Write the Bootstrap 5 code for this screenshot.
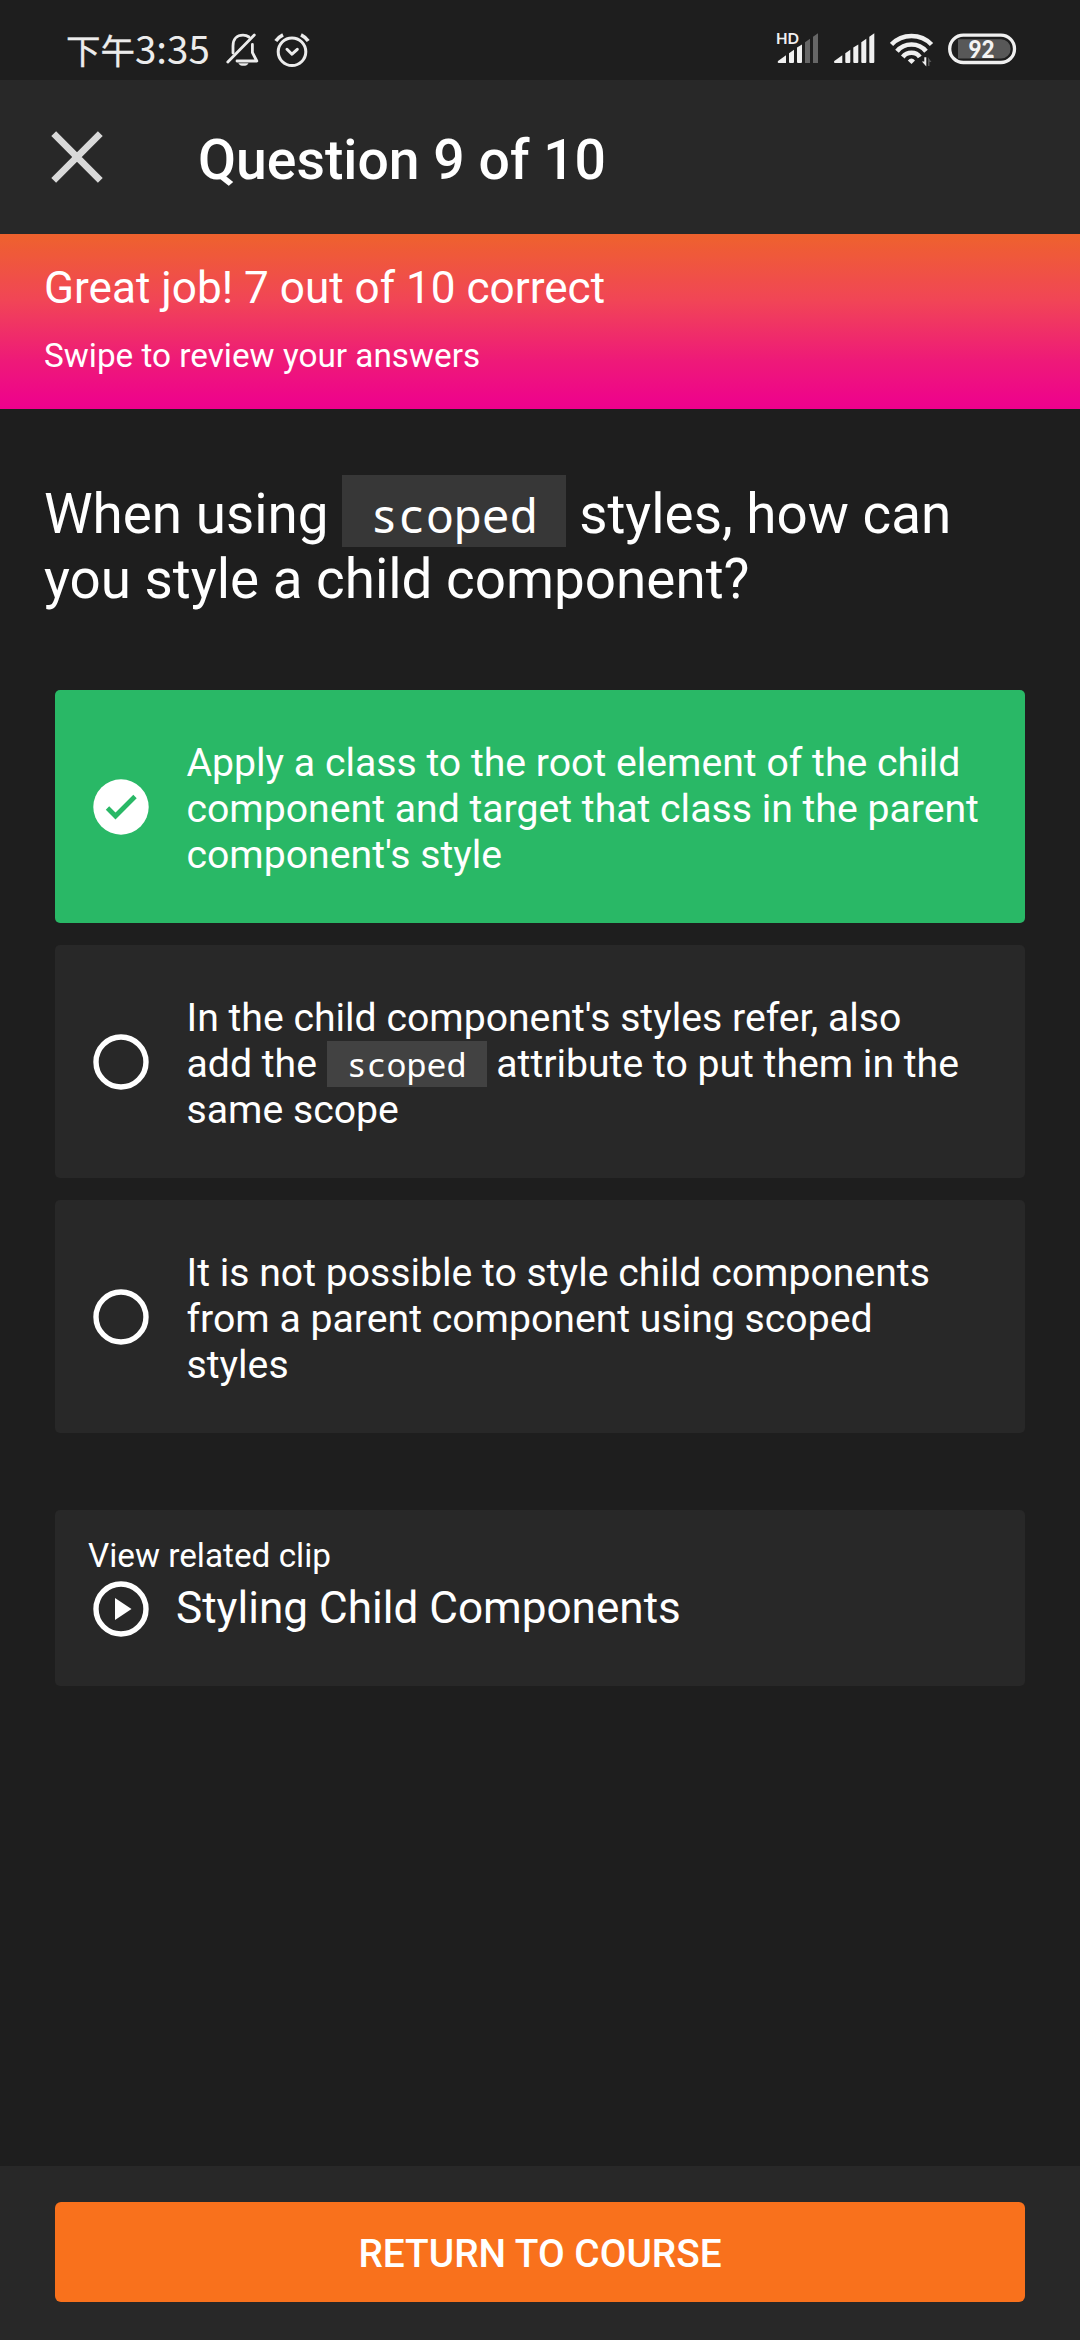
<!DOCTYPE html>
<html lang="en" data-bs-theme="dark">
<head>
<meta charset="utf-8">
<meta name="viewport" content="width=device-width, initial-scale=1">
<title>Question 9 of 10</title>
<link href="https://cdn.jsdelivr.net/npm/bootstrap@5.3.0/dist/css/bootstrap.min.css" rel="stylesheet">
<script src="https://cdn.jsdelivr.net/npm/bootstrap@5.3.0/dist/js/bootstrap.bundle.min.js"></script>
<style>
  body { background: #1e1e1e; color: #fff; font-family: Roboto, "Noto Sans CJK SC", sans-serif; height: 2340px; overflow: hidden; }
  svg { display: block; flex: none; }
  .statusbar { height: 80px; padding: 30px 60px 0 66px; }
  .clock { font-family: "Noto Sans CJK SC", sans-serif; font-size: 38.5px; line-height: 40px; height: 40px; width: 160px; margin-top: -3px; color: #ececec; }
  .clock .ampm { font-size: 34.5px; -webkit-text-stroke: .3px #ececec; }
  .titlebar { height: 154px; background: #282828; padding-left: 51px; }
  .titlebar h1 { font-size: 55.3px; line-height: 64px; font-weight: 500; padding: 7px 0 0; margin-left: 95px; }
  .score { height: 175px; padding: 28px 44px 0; background: linear-gradient(#ee622d, #f14556 38%, #ee1a78 72%, #ee008e); }
  .score-main { font-size: 44.1px; line-height: 52px; margin-bottom: 22px; }
  .score-hint { font-size: 33.3px; line-height: 39px; }
  .question { font-size: 54.8px; line-height: 64.6px; padding: 73px 44px 79px; }
  .code-chip { font-family: "Noto Sans Mono", "DejaVu Sans Mono", monospace; line-height: 1; color: #fff; }
  .question .code-chip { font-size: 46.5px; background: #373737; padding: 8px 28px 0; }
  .option .code-chip { font-size: 33.3px; background: #424242; padding: 0 20px; }
  .options { padding: 0 55px; gap: 22px; }
  .option { height: 233px; background: #282828; border-radius: 5px; padding-left: 38px; }
  .option.correct { background: #29b866; }
  .option p { font-size: 39.2px; line-height: 46px; padding-top: 5px; margin-left: 37.5px; white-space: nowrap; }
  .related { margin: 77px 55px 0; height: 176px; background: #282828; border-radius: 5px; padding: 26px 33px 0; }
  .related-label { font-size: 33.3px; line-height: 39px; margin-bottom: 6px; }
  .related-clip { font-size: 44.1px; line-height: 52px; gap: 27px; padding-left: 5px; }
  .related-clip span { padding-bottom: 2px; }
  .footbar { height: 174px; background: #282828; padding: 36px 55px 0; }
  .btn-return { height: 100px; background: #f9711c; color: #fff; border: 0; border-radius: 6px; font-size: 38.8px; font-weight: 500; padding: 4px 0 0; }
</style>
</head>
<body class="d-flex flex-column">

<div class="statusbar d-flex align-items-start">
  <div class="clock text-nowrap"><span class="ampm">下午</span>3:35</div>
  <svg width="34" height="40" viewBox="226 30 34 40" fill="none" stroke="#ececec" stroke-width="2.8" stroke-linecap="round" stroke-linejoin="round">
    <path d="M233 53V46C233 39 237 35.2 243 35.2C245.5 35.2 247.5 35.9 249 37"/>
    <path d="M252.4 44.5V52.5L256.8 61H237"/>
    <path d="M227.8 62L254.3 35"/>
    <path d="M238.3 63.2H248.5C247.5 66.6 239.5 66.6 238.3 63.2Z" fill="#ececec" stroke="none"/>
  </svg>
  <svg class="ms-2" width="46" height="40" viewBox="268 30 46 40" fill="none" stroke="#ececec" stroke-width="3" stroke-linecap="round" stroke-linejoin="round">
    <circle cx="292" cy="51.8" r="13.8"/>
    <path d="M287 49.3L292 54.2L297.3 49.3"/>
    <path d="M275.8 41Q278.5 37 283 34.8M301 34.8Q305.5 37 308.2 41" stroke-linecap="butt" stroke-width="3.6"/>
  </svg>
  <svg class="ms-auto" width="61" height="50" viewBox="760 20 61 50" fill="#f0f0f0" style="margin-top:-10px">
    <text x="776" y="44.4" font-family="Lato, sans-serif" font-weight="700" font-size="16" textLength="23" lengthAdjust="spacingAndGlyphs">HD</text>
    <path d="M778 61L786 55.3V63H778.5Q777 62.500 778 61ZM789 53.300L794 49.800V62Q794 63 793 63H790Q789 63 789 62ZM797 47.600L802 44.500V62Q802 63 801 63H798Q797 63 797 62Z"/>
    <path d="M805 42.200L810 38.800V63H805ZM813 36.700L818 33.300V63H813Z" fill="#666"/>
  </svg>
  <svg width="69" height="40" viewBox="821 30 69 40" fill="#f0f0f0">
    <path d="M834.300 61L842.300 55.300V63H834.800Q833.300 62.500 834.300 61ZM845.300 53.300L850.300 49.800V62Q850.300 63 849.300 63H846.300Q845.300 63 845.300 62ZM853.300 47.600L858.300 44.500V62Q858.300 63 857.300 63H854.300Q853.300 63 853.300 62ZM861.300 42.200L866.300 38.800V62Q866.300 63 865.300 63H862.300Q861.300 63 861.300 62ZM869.300 36.700L874.300 33.300V62Q874.300 63 873.300 63H870.300Q869.300 63 869.300 62Z"/>
  </svg>
  <svg width="50" height="40" viewBox="890 30 50 40" fill="none" stroke="#f0f0f0" stroke-width="4.600">
    <path d="M891.500 44.500Q899.500 36 911.500 36T931.500 44.500M897 51.300Q902.500 44.500 911.500 44.500T926 51.300M902.800 57Q906 52.800 911.500 52.800T919.800 57"/>
    <path d="M907.800 60.600Q911.500 56.400 915 60.600L911.500 64Z" fill="#f0f0f0" stroke="none"/>
    <path d="M926.300 57.300V66.500L921.900 61.500H924.300V57.300Z" fill="#f0f0f0" stroke="none"/>
    <path d="M928 57.300L931.500 62H929.500V66H928Z" fill="#555" stroke="none"/>
  </svg>
  <svg width="80" height="40" viewBox="940 30 80 40">
    <rect x="949.700" y="35.200" width="64.800" height="27.300" rx="13.600" fill="none" stroke="#f0f0f0" stroke-width="3.300"/>
    <path d="M958 39.300H1001A9.600 9.600 0 0 1 1001 58.500H958Z" fill="#585858"/>
    <text x="968.500" y="57.800" fill="#f4f4f4" font-family="Lato, sans-serif" font-weight="900" font-size="24" textLength="26" lengthAdjust="spacingAndGlyphs">92</text>
  </svg>
</div>

<header class="titlebar d-flex align-items-center">
  <svg width="52" height="52" viewBox="0 0 52 52" stroke="#d9d9d9" stroke-width="6.800"><path d="M2.700 2.700L49.300 49.300M49.300 2.700L2.700 49.300"/></svg>
  <h1 class="mb-0">Question 9 of 10</h1>
</header>

<section class="score">
  <div class="score-main">Great job! 7 out of 10 correct</div>
  <div class="score-hint">Swipe to review your answers</div>
</section>

<main class="d-flex flex-column flex-grow-1">
  <div class="question">When using <span class="code-chip">scoped</span> styles, how can<br>you style a child component?</div>

  <div class="options d-flex flex-column">
    <div class="option correct d-flex align-items-center">
      <svg width="56" height="56" viewBox="0 0 56 56"><circle cx="28" cy="28" r="27.700" fill="#fff"/><path d="M14.500 29L22.500 37L42 17.500" fill="none" stroke="#29b866" stroke-width="4.800"/></svg>
      <p class="mb-0">Apply a class to the root element of the child<br>component and target that class in the parent<br>component's style</p>
    </div>
    <div class="option d-flex align-items-center">
      <svg width="56" height="56" viewBox="0 0 56 56"><circle cx="28" cy="28" r="25" fill="none" stroke="#fff" stroke-width="5.400"/></svg>
      <p class="mb-0">In the child component's styles refer, also<br>add the <span class="code-chip">scoped</span> attribute to put them in the<br>same scope</p>
    </div>
    <div class="option d-flex align-items-center">
      <svg width="56" height="56" viewBox="0 0 56 56"><circle cx="28" cy="28" r="25" fill="none" stroke="#fff" stroke-width="5.400"/></svg>
      <p class="mb-0">It is not possible to style child components<br>from a parent component using scoped<br>styles</p>
    </div>
  </div>

  <div class="related">
    <div class="related-label">View related clip</div>
    <div class="related-clip d-flex align-items-center">
      <svg width="56" height="56" viewBox="0 0 56 56"><circle cx="28" cy="28" r="25" fill="none" stroke="#fff" stroke-width="5.400"/><path d="M22 17L38.500 28L22 39Z" fill="#fff"/></svg>
      <span>Styling Child Components</span>
    </div>
  </div>
</main>

<footer class="footbar">
  <button type="button" class="btn btn-return w-100 d-flex align-items-center justify-content-center">RETURN TO COURSE</button>
</footer>
</body>
</html>
